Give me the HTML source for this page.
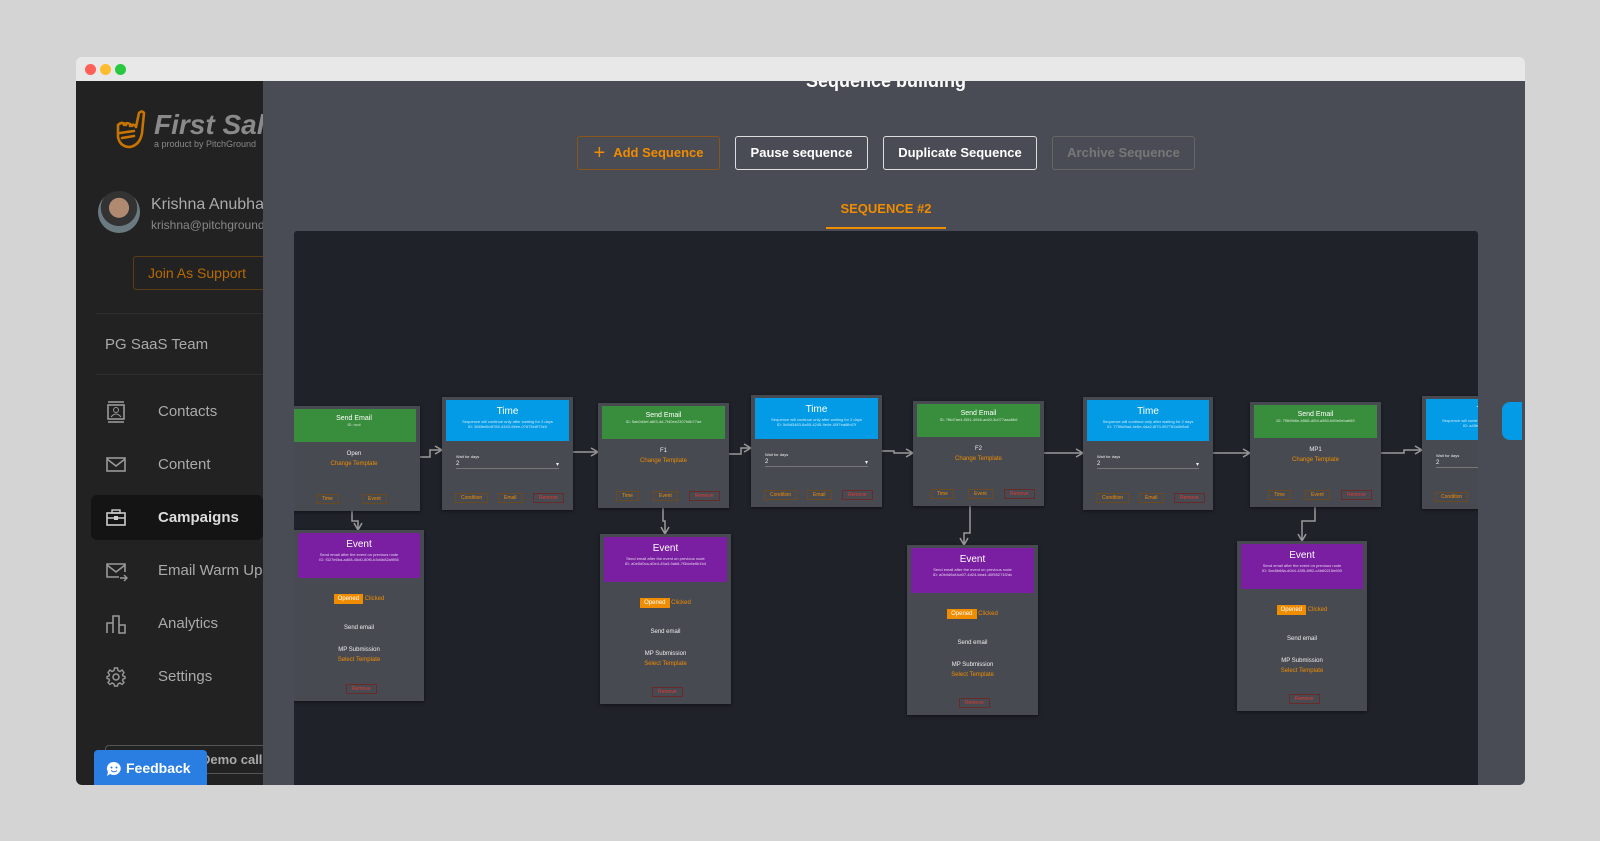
<!DOCTYPE html>
<html><head><meta charset="utf-8"><style>
*{box-sizing:border-box;margin:0;padding:0}
body{width:1600px;height:841px;background:#d4d4d4;font-family:"Liberation Sans",sans-serif;position:relative;overflow:hidden}
.abs{position:absolute}
.win{left:76px;top:57px;width:1449px;height:728px;background:#e8e8e8;border-radius:6px;overflow:hidden}
.dot{position:absolute;top:7px;width:11px;height:11px;border-radius:50%}
.side{left:0;top:24px;width:187px;height:704px;background:#222}
.main{left:187px;top:24px;width:1262px;height:704px;background:#494c54;overflow:hidden}
.btn{position:absolute;top:55px;height:34px;border:1px solid #ddd;border-radius:3px;color:#fff;font-weight:bold;font-size:13px;line-height:32px;text-align:center;white-space:nowrap}
.canvas{left:31px;top:150px;width:1184px;height:560px;background:#20222a;overflow:hidden;border-radius:3px 3px 0 0}
.n{position:absolute;background:#474a51;box-shadow:0 1px 3px rgba(0,0,0,.5);color:#eee;text-align:center;font-size:6px}
.h{margin:3px 4px 0;color:#fff;padding-top:6px}
.g{background:#388e3c;height:33px}
.b{background:#039be5;height:41px}
.p{background:#7b1fa2;height:45px}
.h b{display:block;font-size:7px;font-weight:normal}
.h .t{font-size:10px;margin-bottom:2px}
.h i{display:block;font-style:normal;font-size:4px;opacity:.8}
.o{color:#f08c00}
.r{color:#e53935}
.sb{position:absolute;bottom:7px;height:10px;border:1px solid #6b4a20;font-size:5px;line-height:8px;color:#f08c00;padding:0 5px}
.sb.rr{border-color:#6b2a2a;color:#e53935}
.menu{position:absolute;left:30px;height:22px;font-size:15px;color:#aaa}
.menu span{position:absolute;left:52px;top:0;line-height:22px;white-space:nowrap}
</style></head><body>
<div class="abs win">
 <div class="dot" style="left:9px;background:#fe5f57"></div>
 <div class="dot" style="left:24px;background:#febc2e"></div>
 <div class="dot" style="left:39px;background:#28c840"></div>
 <div class="abs side">
  <svg class="abs" style="left:36px;top:28px" width="36" height="40" viewBox="0 0 36 40"><path d="M6 16 L6 28 Q8 38 18 38 Q28 36 30 24 L32 4 Q30 1 27 4 L24 18 M6 16 Q10 12 14 16 M12 16 Q16 12 20 17 M18 17 Q22 14 24 18 M8 24 L22 22 M10 29 L22 27" fill="none" stroke="#c77400" stroke-width="2.6" stroke-linecap="round"/></svg>
  <div class="abs" style="left:78px;top:28px;font-size:28px;font-weight:bold;font-style:italic;color:#8a8a8a;white-space:nowrap">First Sales</div>
  <div class="abs" style="left:78px;top:58px;font-size:9px;color:#888;white-space:nowrap">a product by PitchGround</div>
  <div class="abs" style="left:22px;top:110px;width:42px;height:42px;border-radius:50%;background:radial-gradient(circle at 50% 40%,#b08a70 0 30%,#333 31% 55%,#6b7a80 56%)"></div>
  <div class="abs" style="left:75px;top:115px;font-size:16px;color:#aaa;white-space:nowrap">Krishna Anubhav</div>
  <div class="abs" style="left:75px;top:137px;font-size:12px;color:#888;white-space:nowrap">krishna@pitchground</div>
  <div class="abs" style="left:57px;top:175px;width:140px;height:34px;border:1px solid #5a3d15;border-radius:3px;color:#b76a00;font-size:14px;line-height:32px;padding-left:14px;white-space:nowrap">Join As Support</div>
  <div class="abs" style="left:20px;top:232px;width:167px;height:1px;background:#2e2e2e"></div>
  <div class="abs" style="left:29px;top:255px;font-size:15px;color:#aaa">PG SaaS Team</div>
  <div class="abs" style="left:20px;top:293px;width:167px;height:1px;background:#2e2e2e"></div>
  <div class="abs" style="left:15px;top:414px;width:172px;height:45px;background:#141414;border-radius:6px"></div>
  <div class="menu" style="top:320px"><svg width="20" height="22"><rect x="2" y="4" width="16" height="14" fill="none" stroke="#999" stroke-width="1.6"/><line x1="2" y1="1" x2="18" y2="1" stroke="#999" stroke-width="1.6"/><line x1="2" y1="21" x2="18" y2="21" stroke="#999" stroke-width="1.6"/><circle cx="10" cy="9" r="2.5" fill="none" stroke="#999"/><path d="M5 16 Q10 10 15 16" fill="none" stroke="#999"/></svg><span>Contacts</span></div>
  <div class="menu" style="top:373px"><svg width="20" height="22"><rect x="1" y="4" width="18" height="13" fill="none" stroke="#999" stroke-width="1.6"/><path d="M1 5 L10 12 L19 5" fill="none" stroke="#999" stroke-width="1.6"/></svg><span>Content</span></div>
  <div class="menu" style="top:426px;color:#ddd;font-weight:bold"><svg width="20" height="22"><rect x="1" y="6" width="18" height="12" fill="none" stroke="#ccc" stroke-width="1.6"/><rect x="6" y="3" width="8" height="3" fill="none" stroke="#ccc" stroke-width="1.4"/><line x1="1" y1="11" x2="19" y2="11" stroke="#ccc" stroke-width="1.4"/><rect x="8" y="9" width="4" height="4" fill="#ccc"/></svg><span>Campaigns</span></div>
  <div class="menu" style="top:479px"><svg width="22" height="22"><path d="M13 17 H1 V4 H19 V12 M1 5 L10 12 L19 5" fill="none" stroke="#999" stroke-width="1.6"/><path d="M14 18 H21 M18 15 L21 18 L18 21" fill="none" stroke="#999" stroke-width="1.4"/></svg><span>Email Warm Up</span></div>
  <div class="menu" style="top:532px"><svg width="20" height="22"><path d="M1 20 V10 H7 V20 M7 20 V3 H13 V20 M13 20 V12 H19 V20 Z" fill="none" stroke="#999" stroke-width="1.6"/></svg><span>Analytics</span></div>
  <div class="menu" style="top:585px"><svg width="20" height="22" viewBox="0 -1 20 22"><circle cx="10" cy="10" r="3" fill="none" stroke="#999" stroke-width="1.5"/><path d="M8.5 1 H11.5 L12 3.5 L14 4.5 L16 3 L18 5.5 L16.5 7.5 L17 9 L19 9.5 V11.5 L17 12 L16.5 13.5 L18 15.5 L16 17.5 L14 16 L12 17 L11.5 19 H8.5 L8 17 L6 16 L4 17.5 L2 15.5 L3.5 13.5 L3 12 L1 11.5 V9.5 L3 9 L3.5 7.5 L2 5.5 L4 3 L6 4.5 L8 3.5 Z" fill="none" stroke="#999" stroke-width="1.4"/></svg><span>Settings</span></div>
  <div class="abs" style="left:29px;top:664px;width:170px;height:29px;border:1px solid #555;border-radius:4px;color:#aaa;font-size:13px;font-weight:bold;line-height:27px;padding-left:95px;white-space:nowrap">Demo call</div>
  <div class="abs" style="left:18px;top:669px;width:113px;height:40px;background:#2a7de1;border-radius:4px 4px 0 0;color:#fff;font-size:14px;font-weight:bold;line-height:36px;padding-left:32px">Feedback
   <svg class="abs" style="left:12px;top:11px" width="16" height="16"><path d="M8 1 A7 6.5 0 1 1 4 13 L1 15 L2 11 A7 6.5 0 0 1 8 1Z" fill="#fff"/><circle cx="5.5" cy="6.5" r="1" fill="#2a7de1"/><circle cx="10.5" cy="6.5" r="1" fill="#2a7de1"/><path d="M5 9.5 Q8 12 11 9.5" stroke="#2a7de1" fill="none"/></svg></div>
 </div>
 <div class="abs main">
  <div class="abs" style="left:0;width:1246px;top:-10px;text-align:center;color:#fff;font-weight:bold;font-size:18px">Sequence building</div>
  <div class="btn" style="left:314px;width:143px;border-color:#8a5518;color:#f08c00"><span style="font-size:20px;font-weight:normal;vertical-align:-2px;margin-right:8px">+</span>Add Sequence</div>
  <div class="btn" style="left:472px;width:133px">Pause sequence</div>
  <div class="btn" style="left:620px;width:154px">Duplicate Sequence</div>
  <div class="btn" style="left:789px;width:143px;border-color:#666;color:#777">Archive Sequence</div>
  <div class="abs" style="left:0;width:1246px;top:120px;text-align:center;color:#f08c00;font-weight:bold;font-size:13px">SEQUENCE #2</div>
  <div class="abs" style="left:563px;top:146px;width:120px;height:2px;background:#f08c00"></div>
  <div class="abs canvas">
   <svg class="abs" style="left:0;top:0" width="1184" height="560" fill="none" stroke="#9a9a9a" stroke-width="1.5">
    <path d="M126 226 H136 V219 H148 M141 215 L148 219 L141 223"/>
    <path d="M279 221 H304 M297 217 L304 221 L297 225"/>
    <path d="M435 223 H447 V217 H457 M450 213 L457 217 L450 221"/>
    <path d="M588 220 H600 V222 H619 M612 218 L619 222 L612 226"/>
    <path d="M750 222 H789 M782 218 L789 222 L782 226"/>
    <path d="M919 222 H956 M949 218 L956 222 L949 226"/>
    <path d="M1087 222 H1110 V219 H1128 M1121 215 L1128 219 L1121 223"/>
    <path d="M58 280 V290 H64 V299 M60 292 L64 299 L68 292"/>
    <path d="M369 277 V290 H371 V303 M367 296 L371 303 L375 296"/>
    <path d="M676 275 V302 H670 V314 M666 307 L670 314 L674 307"/>
    <path d="M1021 276 V290 H1008 V310 M1004 303 L1008 310 L1012 303"/>
   </svg>
   <div class="n" style="left:-6px;top:175px;width:132px;height:105px"><div class="h g"><b>Send Email</b><i>ID: root</i></div><div style="margin-top:9px">Open</div><div class="o" style="margin-top:4px">Change Template</div><div class="sb" style="left:28px">Time</div><div class="sb" style="left:74px">Event</div></div>
   <div class="n" style="left:304px;top:172px;width:131px;height:105px"><div class="h g"><b>Send Email</b><i>ID: 5ab0d4ef-a6f3-4d-7f40ee2307b6b77ae</i></div><div style="margin-top:9px">F1</div><div class="o" style="margin-top:4px">Change Template</div><div class="sb" style="left:18px">Time</div><div class="sb" style="left:55px">Event</div><div class="sb rr" style="left:91px">Remove</div></div>
   <div class="n" style="left:619px;top:170px;width:131px;height:105px"><div class="h g"><b>Send Email</b><i>ID: 7f6d7ae4-f351-4946-ac60-3c077aaa6b6</i></div><div style="margin-top:9px">F2</div><div class="o" style="margin-top:4px">Change Template</div><div class="sb" style="left:18px">Time</div><div class="sb" style="left:55px">Event</div><div class="sb rr" style="left:91px">Remove</div></div>
   <div class="n" style="left:956px;top:171px;width:131px;height:105px"><div class="h g"><b>Send Email</b><i>ID: 7f5b5b6e-b568-d2bf-a980-b60e0ebab59</i></div><div style="margin-top:9px">MP1</div><div class="o" style="margin-top:4px">Change Template</div><div class="sb" style="left:18px">Time</div><div class="sb" style="left:55px">Event</div><div class="sb rr" style="left:91px">Remove</div></div>
   <div class="n" style="left:148px;top:166px;width:131px;height:113px"><div class="h b"><b class="t">Time</b><i>Sequence will continue only after waiting for 2 days</i><i>ID: 3665e8b4f765-4343-96ee-07675e8f73e0</i></div><div style="text-align:left;margin:13px 14px 0;font-size:4px">Wait for days</div><div style="text-align:left;margin:2px 14px 0;border-bottom:1px solid #777;height:8px">2<span style="float:right">▾</span></div><div class="sb" style="left:13px">Condition</div><div class="sb" style="left:56px">Email</div><div class="sb rr" style="left:91px">Remove</div></div>
   <div class="n" style="left:457px;top:164px;width:131px;height:112px"><div class="h b"><b class="t">Time</b><i>Sequence will continue only after waiting for 2 days</i><i>ID: 5d9d3483-8a55-4245-9e4e-00f7ea6fb47f</i></div><div style="text-align:left;margin:13px 14px 0;font-size:4px">Wait for days</div><div style="text-align:left;margin:2px 14px 0;border-bottom:1px solid #777;height:8px">2<span style="float:right">▾</span></div><div class="sb" style="left:13px">Condition</div><div class="sb" style="left:56px">Email</div><div class="sb rr" style="left:91px">Remove</div></div>
   <div class="n" style="left:789px;top:166px;width:130px;height:113px"><div class="h b"><b class="t">Time</b><i>Sequence will continue only after waiting for 2 days</i><i>ID: 7756d9ad-4e6e-4da2-8f73-957762a0b5a6</i></div><div style="text-align:left;margin:13px 14px 0;font-size:4px">Wait for days</div><div style="text-align:left;margin:2px 14px 0;border-bottom:1px solid #777;height:8px">2<span style="float:right">▾</span></div><div class="sb" style="left:13px">Condition</div><div class="sb" style="left:56px">Email</div><div class="sb rr" style="left:91px">Remove</div></div>
   <div class="n" style="left:1128px;top:165px;width:131px;height:113px"><div class="h b"><b class="t">Time</b><i>Sequence will continue only after waiting for 2 days</i><i>ID: a45bd91745-4a0a-b77b</i></div><div style="text-align:left;margin:13px 14px 0;font-size:4px">Wait for days</div><div style="text-align:left;margin:2px 14px 0;border-bottom:1px solid #777;height:8px">2</div><div class="sb" style="left:13px">Condition</div></div>
   <div class="n" style="left:0;top:299px;width:130px;height:171px"><div class="h p"><b class="t">Event</b><i>Send email after the event on previous node</i><i>ID: f327e6ba-ad08-45d0-80f5-b3d4b82a9f56</i></div><div style="margin-top:18px"><span style="background:#f08c00;color:#fff;padding:2px 4px">Opened</span> <span class="o">Clicked</span></div><div style="margin-top:23px">Send email</div><div style="margin-top:16px">MP Submission</div><div class="o" style="margin-top:4px">Select Template</div><div class="sb rr" style="left:52px">Remove</div></div>
   <div class="n" style="left:306px;top:303px;width:131px;height:170px"><div class="h p"><b class="t">Event</b><i>Send email after the event on previous node</i><i>ID: a0e5d0ca-d0e4-45a3-9ab6-7f3dc6e6b1b4</i></div><div style="margin-top:18px"><span style="background:#f08c00;color:#fff;padding:2px 4px">Opened</span> <span class="o">Clicked</span></div><div style="margin-top:23px">Send email</div><div style="margin-top:16px">MP Submission</div><div class="o" style="margin-top:4px">Select Template</div><div class="sb rr" style="left:52px">Remove</div></div>
   <div class="n" style="left:613px;top:314px;width:131px;height:170px"><div class="h p"><b class="t">Event</b><i>Send email after the event on previous node</i><i>ID: a0b4d6af-ba07-4d24-bea4-40f55271f2dc</i></div><div style="margin-top:18px"><span style="background:#f08c00;color:#fff;padding:2px 4px">Opened</span> <span class="o">Clicked</span></div><div style="margin-top:23px">Send email</div><div style="margin-top:16px">MP Submission</div><div class="o" style="margin-top:4px">Select Template</div><div class="sb rr" style="left:52px">Remove</div></div>
   <div class="n" style="left:943px;top:310px;width:130px;height:170px"><div class="h p"><b class="t">Event</b><i>Send email after the event on previous node</i><i>ID: 9ce8b68a-d044-43f5-8f92-c4b60215e600</i></div><div style="margin-top:18px"><span style="background:#f08c00;color:#fff;padding:2px 4px">Opened</span> <span class="o">Clicked</span></div><div style="margin-top:23px">Send email</div><div style="margin-top:16px">MP Submission</div><div class="o" style="margin-top:4px">Select Template</div><div class="sb rr" style="left:52px">Remove</div></div>
  </div>
  <div class="abs" style="left:1239px;top:321px;width:20px;height:38px;background:#039be5;border-radius:8px 0 0 8px"></div>
 </div>
</div>
</body></html>
